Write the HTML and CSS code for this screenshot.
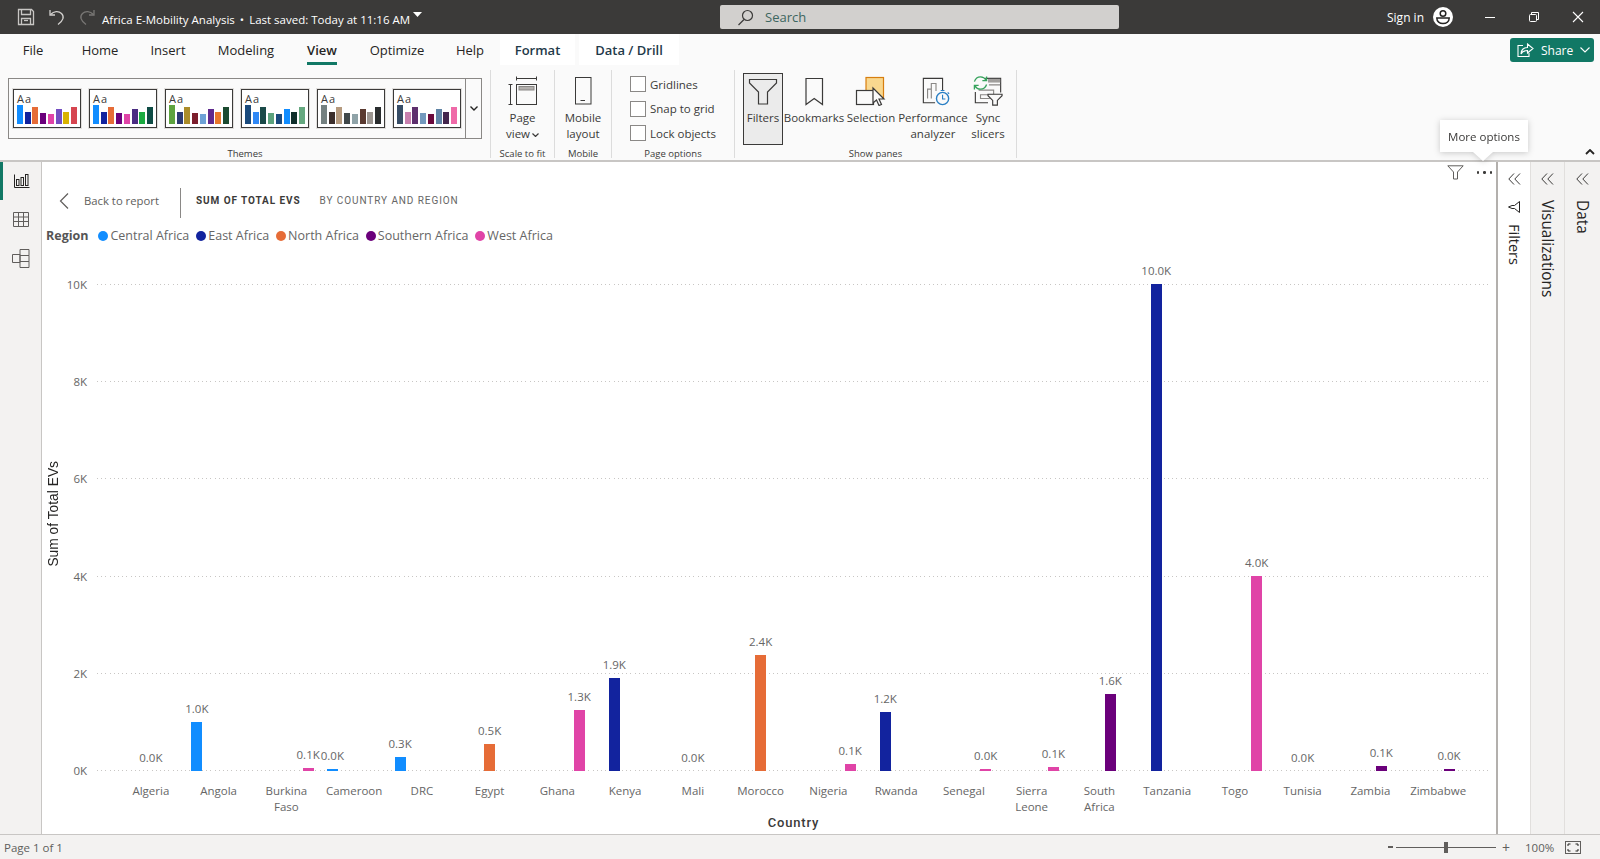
FILE: index.html
```html
<!DOCTYPE html>
<html lang="en">
<head>
<meta charset="utf-8">
<title>Africa E-Mobility Analysis</title>
<link rel="stylesheet" href="styles.css">
</head>
<body>
<header class="titlebar">
  <div class="qat">
    <svg class="q-save" width="18" height="18" viewBox="0 0 18 18" fill="none" stroke="#c8c6c4" stroke-width="1.3"><path d="M1.5 1.5h13l2 2v13h-15z"/><path d="M4.5 1.5v5h9v-5"/><path d="M4.5 16.5v-6h9v6"/><path d="M7 12.5h4"/></svg>
    <svg class="q-undo" width="16" height="18" viewBox="0 0 16 18" fill="none" stroke="#d2d0ce" stroke-width="1.3"><path d="M1 2v5h5"/><path d="M1.5 6.5C5 3 9.5 2.5 12.5 5.5c3 3 2 7-3.5 11"/></svg>
    <svg class="q-redo" width="16" height="18" viewBox="0 0 16 18" fill="none" stroke="#797775" stroke-width="1.3"><path d="M15 2v5h-5"/><path d="M14.5 6.5C11 3 6.5 2.5 3.5 5.5c-3 3-2 7 3.5 11"/></svg>
  </div>
  <div class="doc-title">Africa E-Mobility Analysis<span class="dot">•</span>Last saved: Today at 11:16 AM</div>
  <svg class="doc-caret" width="9" height="5" viewBox="0 0 9 5"><path d="M0 0h9L4.500 5z" fill="#fff"/></svg>
  <div class="search">
    <svg width="17" height="17" viewBox="0 0 17 17" fill="none" stroke="#3b3a39" stroke-width="1.2"><circle cx="10.500" cy="6.500" r="5"/><path d="M7 10.500L1.500 16"/></svg>
    <span>Search</span>
  </div>
  <div class="account">
    <span class="signin">Sign in</span>
    <svg class="avatar" width="20" height="20" viewBox="0 0 20 20"><circle cx="10" cy="10" r="10" fill="#fff"/><circle cx="10" cy="6.500" r="2.800" fill="none" stroke="#252423" stroke-width="1.500"/><path d="M3.800 11h12.400c0 3.500-2.800 5.500-6.200 5.500S3.800 14.500 3.800 11z" fill="none" stroke="#252423" stroke-width="1.500"/></svg>
  </div>
  <div class="winbtns">
    <svg width="12" height="12" viewBox="0 0 12 12" stroke="#fff" fill="none"><path d="M1 6.500h10"/></svg>
    <svg width="12" height="12" viewBox="0 0 12 12" stroke="#fff" fill="none"><rect x="1.500" y="3.500" width="7" height="7" rx="1"/><path d="M3.500 3V1.500h7v7H9"/></svg>
    <svg width="12" height="12" viewBox="0 0 12 12" stroke="#fff" fill="none" stroke-width="1.100"><path d="M1 1l10 10M11 1L1 11"/></svg>
  </div>
</header>

<nav class="tabs">
  <a class="tab t-file"><span>File</span></a>
  <a class="tab t-home"><span>Home</span></a>
  <a class="tab t-insert"><span>Insert</span></a>
  <a class="tab t-modeling"><span>Modeling</span></a>
  <a class="tab t-view active"><span>View</span></a>
  <a class="tab t-optimize"><span>Optimize</span></a>
  <a class="tab t-help"><span>Help</span></a>
  <a class="tab ctx t-format"><span>Format</span></a>
  <a class="tab ctx t-data"><span>Data / Drill</span></a>
  <button class="share">
    <svg width="17" height="15" viewBox="0 0 17 15" fill="none" stroke="#fff" stroke-width="1.100"><path d="M6 2.500H1v11h11V10"/><path d="M10.500 1l5.500 4.500-5.500 4.500V7.500C7.500 7.500 5 8.500 4 11c0-4 2.500-6.500 6.500-6.500z"/></svg>
    <span>Share</span>
    <svg width="10" height="6" viewBox="0 0 10 6" fill="none" stroke="#fff" stroke-width="1.100"><path d="M.5.500L5 5 9.500.500"/></svg>
  </button>
</nav>

<section class="ribbon">
  <div class="group g-themes">
    <div class="themes">
      <div class="theme-list">
        <div class="theme-card"><span class="aa">Aa</span><div class="mini"><i style="background:#118dff"></i><i style="background:#12239e"></i><i style="background:#e66c37"></i><i style="background:#6b007b"></i><i style="background:#e044a7"></i><i style="background:#744ec2"></i><i style="background:#d9b300"></i><i style="background:#d64550"></i></div></div>
        <div class="theme-card"><span class="aa">Aa</span><div class="mini"><i style="background:#118dff"></i><i style="background:#12239e"></i><i style="background:#e66c37"></i><i style="background:#6b007b"></i><i style="background:#e044a7"></i><i style="background:#4a2d82"></i><i style="background:#1aab40"></i><i style="background:#0f4c45"></i></div></div>
        <div class="theme-card"><span class="aa">Aa</span><div class="mini"><i style="background:#5ea33f"></i><i style="background:#2d3a73"></i><i style="background:#ab8c2a"></i><i style="background:#7c1e2c"></i><i style="background:#6ea2d6"></i><i style="background:#5f2a8e"></i><i style="background:#e8782c"></i><i style="background:#1b4a30"></i></div></div>
        <div class="theme-card"><span class="aa">Aa</span><div class="mini"><i style="background:#1a4a7c"></i><i style="background:#2f88f5"></i><i style="background:#1a4a48"></i><i style="background:#5ca27c"></i><i style="background:#1a4a7c"></i><i style="background:#118dff"></i><i style="background:#10302c"></i><i style="background:#65a87f"></i></div></div>
        <div class="theme-card"><span class="aa">Aa</span><div class="mini"><i style="background:#748080"></i><i style="background:#3c2f2c"></i><i style="background:#b59a7e"></i><i style="background:#40484a"></i><i style="background:#8fa3a8"></i><i style="background:#5a3a30"></i><i style="background:#9b9590"></i><i style="background:#2a2d2e"></i></div></div>
        <div class="theme-card"><span class="aa">Aa</span><div class="mini"><i style="background:#374d66"></i><i style="background:#c880ae"></i><i style="background:#5e2f6d"></i><i style="background:#7399bd"></i><i style="background:#6b0a3c"></i><i style="background:#5f83a5"></i><i style="background:#44264d"></i><i style="background:#ef6aa8"></i></div></div>
      </div>
      <div class="theme-more"><svg width="8" height="5" viewBox="0 0 8 5" fill="none" stroke="#252423" stroke-width="1.400"><path d="M.5.500L4 4 7.500.500"/></svg></div>
    </div>
    <div class="group-label">Themes</div>
  </div>

  <div class="group g-scale">
    <div class="rbtn">
      <svg class="ricon" width="30" height="30" viewBox="0 0 30 30" fill="none" stroke="#3b3a39"><path d="M8.500 2.500h20M8.500 .5v4M28.500 .5v4"/><path d="M2.500 8.500v20M.5 8.500h4M.5 28.500h4"/><rect x="8.500" y="8.500" width="20" height="20"/><rect x="11" y="10.500" width="15" height="3.500" fill="#b3b0ad" stroke="#8a8886"/></svg>
      <span class="rlabel">Page<br>view<svg class="mini-caret" width="7" height="4" viewBox="0 0 7 4" fill="none" stroke="#3b3a39" stroke-width="1.200"><path d="M.5.500L3.500 3.500 6.500.500"/></svg></span>
    </div>
    <div class="group-label">Scale to fit</div>
  </div>

  <div class="group g-mobile">
    <div class="rbtn">
      <svg class="ricon" width="18" height="30" viewBox="0 0 18 30" fill="none" stroke="#3b3a39"><rect x="1.500" y="1.500" width="15.500" height="26.500"/><path d="M6.500 24.500h4.500"/></svg>
      <span class="rlabel">Mobile<br>layout</span>
    </div>
    <div class="group-label">Mobile</div>
  </div>

  <div class="group g-options">
    <div class="checks">
      <label class="check"><span class="box"></span>Gridlines</label>
      <label class="check"><span class="box"></span>Snap to grid</label>
      <label class="check"><span class="box"></span>Lock objects</label>
    </div>
    <div class="group-label">Page options</div>
  </div>

  <div class="group g-panes">
    <div class="rbtns">
      <div class="rbtn b-filters on">
        <svg class="ricon" width="30" height="30" viewBox="0 0 30 30" fill="none" stroke="#3b3a39" stroke-width="1.200"><path d="M1.500 3.500h27v3.500l-9 9v12h-9v-12l-9-9z"/></svg>
        <span class="rlabel">Filters</span>
      </div>
      <div class="rbtn b-bookmarks">
        <svg class="ricon" width="30" height="30" viewBox="0 0 30 30" fill="none" stroke="#3b3a39" stroke-width="1.200"><path d="M7 2.500h16.500v26L15.200 22.500 7 28.500z"/></svg>
        <span class="rlabel">Bookmarks</span>
      </div>
      <div class="rbtn b-selection">
        <svg class="ricon" width="32" height="30" viewBox="0 0 32 30" fill="none"><rect x="11" y="1.500" width="17.500" height="20" fill="#f9d88f" stroke="#d77e0f" stroke-width="1.200"/><rect x="1.500" y="14.500" width="17" height="14" fill="#fafafa" stroke="#3b3a39" stroke-width="1.200"/><path d="M18 12v15l3.500-3 2.500 5.500 2.500-1-2.500-5.500h5z" fill="#fafafa" stroke="#3b3a39" stroke-width="1.200"/></svg>
        <span class="rlabel">Selection</span>
      </div>
      <div class="rbtn b-perf">
        <svg class="ricon" width="32" height="32" viewBox="0 0 32 32" fill="none"><path d="M23 15V2.500H2.500v26H15" stroke="#3b3a39" stroke-width="1.200"/><path d="M7 24V14h4v10M11 24V8h5v8" stroke="#8a8886" stroke-width="1.200"/><circle cx="23" cy="24" r="6.500" fill="#fafafa" stroke="#2a7fc4" stroke-width="1.500"/><path d="M23 20v4.500h3M21 15.500h4M28.500 17.500l1.500 1.500" stroke="#2a7fc4" stroke-width="1.200"/></svg>
        <span class="rlabel">Performance<br>analyzer</span>
      </div>
      <div class="rbtn b-sync">
        <svg class="ricon" width="32" height="32" viewBox="0 0 32 32" fill="none"><path d="M13 2.500h16.500v15M2.500 17v11.500H16" stroke="#3b3a39" stroke-width="1.200"/><rect x="16" y="3" width="13" height="4" fill="#a19f9d"/><path d="M17 9.500h12M6 15h16v5H8v4h10" stroke="#8a8886" stroke-width="1.200"/><path d="M1.500 6c1-3 3.500-5 6.500-5 2.500 0 4.500 1 6 3.500M14.500 .5v4.500H10M14.500 9c-1 3-3.500 5-6.500 5-2.500 0-4.500-1-6-3.500M1.500 14.500V10H6" stroke="#36a35c" stroke-width="1.400"/><path d="M16 19.500h15v1.500l-5 5v5h-5v-5l-5-5z" fill="#fafafa" stroke="#3b3a39" stroke-width="1.200"/></svg>
        <span class="rlabel">Sync<br>slicers</span>
      </div>
    </div>
    <div class="group-label">Show panes</div>
  </div>

  <svg class="collapse" width="10" height="6" viewBox="0 0 10 6" fill="none" stroke="#252423" stroke-width="1.800"><path d="M1 5l4-4 4 4"/></svg>
</section>

<main class="main">
  <aside class="nav">
    <div class="nav-item current"><svg width="16" height="14" viewBox="0 0 16 14" fill="none" stroke="#252423"><path d="M.5.500v13h15"/><rect x="2.500" y="5.500" width="2.500" height="6"/><rect x="7" y="3.500" width="2.500" height="8"/><rect x="11.500" y=".5" width="2.500" height="11"/></svg></div>
    <div class="nav-item"><svg width="16" height="15" viewBox="0 0 16 15" fill="none" stroke="#605e5c"><path d="M.5.500h15v14H.5zM.5 5h15M.5 9.500h15M5.500.5v14M10.500.5v14"/></svg></div>
    <div class="nav-item"><svg width="18" height="19" viewBox="0 0 18 19" fill="none" stroke="#605e5c"><path d="M.5 5.500h7.500v8H.5zM8 .5h9v6H8zM8 6.500h9v6H8zM8 12.500h9v6H8z"/></svg></div>
  </aside>

  <section class="canvas">
    <div class="vis-tools">
      <svg width="17" height="15" viewBox="0 0 17 15" fill="none" stroke="#605e5c"><path d="M.8.800h15.400L10.500 7v7h-4V7z"/></svg>
      <span class="dots"><i></i><i></i><i></i></span>
    </div>
    <div class="drill-head">
      <div class="back">
        <svg width="10" height="16" viewBox="0 0 10 16" fill="none" stroke="#605e5c" stroke-width="1.200"><path d="M9 .5L1.500 8 9 15.500"/></svg>
        <span>Back to report</span>
      </div>
      <div class="crumb"><b>SUM OF TOTAL EVS</b><span>BY COUNTRY AND REGION</span></div>
    </div>
    <div class="legend">
      <strong>Region</strong>
      <span class="lg r1">Central Africa</span>
      <span class="lg r2">East Africa</span>
      <span class="lg r3">North Africa</span>
      <span class="lg r4">Southern Africa</span>
      <span class="lg r5">West Africa</span>
    </div>
    <div class="chart">
      <div class="y-title"><span>Sum of Total EVs</span></div>
      <div class="y-ticks"><span>10K</span><span>8K</span><span>6K</span><span>4K</span><span>2K</span><span>0K</span></div>
      <div class="plot-wrap">
        <div class="plot">
          <div class="grid"><i></i><i></i><i></i><i></i><i></i><i></i></div>
          <div class="cols">
            <div class="col"><div class="bw r3"><span>0.0K</span><i style="height:0"></i></div></div>
            <div class="col"><div class="bw r1"><span>1.0K</span><i style="height:49px"></i></div></div>
            <div class="col"><div class="bw r5"><span>0.1K</span><i style="height:3px"></i></div></div>
            <div class="col"><div class="bw r1"><span>0.0K</span><i style="height:2px"></i></div></div>
            <div class="col"><div class="bw r1"><span>0.3K</span><i style="height:14px"></i></div></div>
            <div class="col"><div class="bw r3"><span>0.5K</span><i style="height:27px"></i></div></div>
            <div class="col"><div class="bw r5"><span>1.3K</span><i style="height:61px"></i></div></div>
            <div class="col"><div class="bw r2"><span>1.9K</span><i style="height:93px"></i></div></div>
            <div class="col"><div class="bw r3"><span>0.0K</span><i style="height:0"></i></div></div>
            <div class="col"><div class="bw r3"><span>2.4K</span><i style="height:116px"></i></div></div>
            <div class="col"><div class="bw r5"><span>0.1K</span><i style="height:7px"></i></div></div>
            <div class="col"><div class="bw r2"><span>1.2K</span><i style="height:59px"></i></div></div>
            <div class="col"><div class="bw r5"><span>0.0K</span><i style="height:2px"></i></div></div>
            <div class="col"><div class="bw r5"><span>0.1K</span><i style="height:4px"></i></div></div>
            <div class="col"><div class="bw r4"><span>1.6K</span><i style="height:77px"></i></div></div>
            <div class="col"><div class="bw r2"><span>10.0K</span><i style="height:487px"></i></div></div>
            <div class="col"><div class="bw r5"><span>4.0K</span><i style="height:195px"></i></div></div>
            <div class="col"><div class="bw r3"><span>0.0K</span><i style="height:0"></i></div></div>
            <div class="col"><div class="bw r4"><span>0.1K</span><i style="height:5px"></i></div></div>
            <div class="col"><div class="bw r4"><span>0.0K</span><i style="height:2px"></i></div></div>
          </div>
        </div>
        <div class="cats">
          <span>Algeria</span><span>Angola</span><span>Burkina<br>Faso</span><span>Cameroon</span><span>DRC</span><span>Egypt</span><span>Ghana</span><span>Kenya</span><span>Mali</span><span>Morocco</span><span>Nigeria</span><span>Rwanda</span><span>Senegal</span><span>Sierra<br>Leone</span><span>South<br>Africa</span><span>Tanzania</span><span>Togo</span><span>Tunisia</span><span>Zambia</span><span>Zimbabwe</span>
        </div>
        <div class="x-title">Country</div>
      </div>
    </div>
  </section>

  <aside class="pane p-filters">
    <svg class="dbl" width="13" height="12" viewBox="0 0 13 12" fill="none" stroke="#3b3a39"><path d="M6 .5L.8 6 6 11.500M12 .5L6.800 6 12 11.500"/></svg>
    <svg class="pane-icon" width="12" height="12" viewBox="0 0 12 12" fill="none" stroke="#252423"><path d="M11.500.5v11L6.500 7.500H4L.5 6l3.500-1.500h2.500z"/></svg>
    <span class="pane-text">Filters</span>
  </aside>
  <aside class="pane p-viz">
    <svg class="dbl" width="13" height="12" viewBox="0 0 13 12" fill="none" stroke="#3b3a39"><path d="M6 .5L.8 6 6 11.500M12 .5L6.800 6 12 11.500"/></svg>
    <span class="pane-text">Visualizations</span>
  </aside>
  <aside class="pane p-data">
    <svg class="dbl" width="13" height="12" viewBox="0 0 13 12" fill="none" stroke="#3b3a39"><path d="M6 .5L.8 6 6 11.500M12 .5L6.800 6 12 11.500"/></svg>
    <span class="pane-text">Data</span>
  </aside>
</main>

<footer class="status">
  <span class="page-no">Page 1 of 1</span>
  <div class="zoomer">
    <span class="z-minus"></span>
    <div class="z-track"><i></i></div>
    <span class="z-plus">+</span>
    <span class="z-val">100%</span>
    <svg width="16" height="13" viewBox="0 0 16 13" fill="none" stroke="#605e5c"><rect x=".5" y=".5" width="15" height="12"/><path d="M3 5V3h2.500M10.500 3H13v2M13 8v2h-2.500M5.500 10H3V8" stroke="#252423"/></svg>
  </div>
</footer>

<div class="tooltip">More options</div>
</body>
</html>
```

FILE: styles.css
```css
* { box-sizing: border-box; }
html, body { margin: 0; padding: 0; }
body {
  position: relative;
  width: 1600px;
  height: 859px;
  overflow: hidden;
  display: flex;
  flex-direction: column;
  font-family: "Open Sans", "Noto Sans", sans-serif;
  font-size: 12px;
  color: #252423;
  background: #f3f2f1;
}

/* Title bar */
.titlebar {
  flex: 0 0 34px;
  display: flex;
  align-items: center;
  background: #3b3a39;
  color: #fff;
}
.qat { display: flex; align-items: center; margin-left: 17px; width: 85px; }
.q-undo { margin-left: 14px; }
.q-redo { margin-left: 14px; }
.doc-title { font-size: 11.5px; width: 311px; white-space: nowrap; padding-top: 4px; }
.dot { margin: 0 5px; }
.doc-caret { margin-bottom: 6px; }
.search {
  margin-left: 298px;
  width: 399px;
  height: 24px;
  background: #d2d0ce;
  border-radius: 2px;
  display: flex;
  align-items: center;
  padding-left: 17px;
  color: #3d6660;
  font-size: 13px;
  gap: 11px;
}
.account { display: flex; align-items: center; margin-left: 268px; gap: 9px; }
.signin { font-size: 12px; }
.winbtns { display: flex; align-items: center; margin-left: 31px; gap: 32px; }

/* Tabs */
.tabs {
  flex: 0 0 31px;
  display: flex;
  align-items: stretch;
  background: #fafafa;
}
.tab { display: flex; justify-content: center; padding-top: 8px; font-size: 13px; line-height: 16px; }
.tab span { display: block; height: 23px; padding-bottom: 4px; }
.t-file { width: 66px; }
.t-home { width: 68px; }
.t-insert { width: 68px; }
.t-modeling { width: 88px; }
.t-view { width: 64px; }
.t-optimize { width: 86px; }
.t-help { width: 60px; }
.tab.active span { border-bottom: 3px solid #117865; }
.tab.active { font-weight: 600; }
.ctx { background: #fff; font-weight: 600; color: #1f3a4a; }
.t-format { width: 75px; margin-right: 4px; }
.t-data { width: 100px; }
.share {
  margin: 4px 6px 3px auto;
  width: 84px;
  height: 24px;
  background: #117865;
  border: 0;
  border-radius: 3px;
  color: #fff;
  font: 12px "Open Sans", sans-serif;
  display: flex;
  align-items: center;
  padding: 0 0 0 7px;
  gap: 7px;
}

/* Ribbon */
.ribbon {
  flex: 0 0 95px;
  display: flex;
  padding: 5px 6px 2px 8px;
  background: #fafafa;
}
.group {
  display: flex;
  flex-direction: column;
  justify-content: space-between;
  border-right: 1px solid #dcdcdc;
}
.group-label { font-size: 9.5px; line-height: 12px; margin-bottom: -2px; text-align: center; color: #3b3a39; }
.g-themes { width: 483px; padding-right: 8px; }
.themes {
  margin-top: 8px;
  height: 61px;
  display: flex;
  border: 1px solid #8a8886;
}
.theme-list { flex: 1; display: flex; gap: 8px; padding: 10px 0 0 4px; }
.theme-card {
  width: 68px;
  height: 39px;
  border: 1.5px solid #3b3a39;
  outline: 1px solid #e1dfdd;
  background: #fff;
  padding: 2px 3px 0;
  position: relative;
}
.aa { display: block; font-size: 11px; line-height: 13px; letter-spacing: 1px; color: #3b3a39; }
.mini { position: absolute; left: 3px; right: 3px; bottom: 3px; display: flex; align-items: flex-end; justify-content: space-between; }
.mini i { display: block; width: 6px; }
.mini i:nth-child(1) { height: 19px; }
.mini i:nth-child(2) { height: 12px; }
.mini i:nth-child(3) { height: 17px; }
.mini i:nth-child(4) { height: 11px; }
.mini i:nth-child(5) { height: 10px; }
.mini i:nth-child(6) { height: 15px; }
.mini i:nth-child(7) { height: 12px; }
.mini i:nth-child(8) { height: 17px; }
.theme-more {
  flex: 0 0 16px;
  border-left: 1px solid #8a8886;
  display: flex;
  align-items: center;
  justify-content: center;
}
.g-scale { width: 64px; align-items: stretch; }
.g-mobile { width: 57px; }
.g-options { width: 123px; }
.g-panes { width: 282px; }
.rbtn {
  display: flex;
  flex-direction: column;
  align-items: center;
  height: 72px;
  margin-top: 3px;
  padding-top: 3px;
  flex: none;
}
.ricon { height: 30px; flex: none; }
.rlabel { margin-top: 4px; font-size: 11.5px; line-height: 16px; text-align: center; white-space: nowrap; color: #3b3a39; }
.mini-caret { margin-left: 2px; vertical-align: 1px; }
.checks { padding: 6px 0 0 18px; display: flex; flex-direction: column; gap: 8.5px; }
.check { display: flex; align-items: center; height: 16px; gap: 4px; font-size: 11.5px; color: #3b3a39; }
.box { width: 16px; height: 16px; border: 1px solid #8a8886; background: #fff; }
.rbtns { display: flex; padding-left: 8px; }
.rbtns .rbtn { flex: none; }
.b-filters { width: 40px; }
.b-filters.on { background: #ebebeb; border: 1.5px solid #3b3a39; padding-top: 1.5px; }
.b-bookmarks { width: 62px; }
.b-selection { width: 52px; }
.b-perf { width: 72px; }
.b-perf .ricon { margin-left: 5px; }
.b-sync { width: 38px; }
.collapse { margin-left: auto; align-self: flex-end; margin-bottom: 3px; margin-right: -1px; }

/* Main area */
.main {
  flex: 0 0 675px;
  display: flex;
  border-top: 2px solid #c8c6c4;
  border-bottom: 1px solid #c8c6c4;
  background: #f3f2f1;
}
.nav { flex: 0 0 41px; display: flex; flex-direction: column; }
.nav-item { height: 39px; display: flex; align-items: center; justify-content: center; }
.nav-item.current { border-left: 3px solid #117865; height: 38px; }
.canvas {
  flex: 1;
  min-width: 0;
  display: flex;
  flex-direction: column;
  background: #fff;
  border-left: 1px solid #c8c6c4;
  border-right: 2px solid #b3b0ad;
}
.vis-tools { height: 23px; display: flex; align-items: center; justify-content: flex-end; gap: 13px; padding: 0 4px 2px 0; }
.dots { display: flex; gap: 4px; }
.dots i { display: block; width: 2.5px; height: 2.5px; background: #3b3a39; border-radius: 50%; }
.drill-head { margin-top: 3px; height: 30px; display: flex; align-items: center; padding-left: 17px; }
.back { display: flex; align-items: center; gap: 15px; width: 122px; height: 30px; padding-bottom: 5px; border-right: 1px solid #8a8886; color: #605e5c; font-size: 11.3px; }
.crumb { display: flex; gap: 19px; padding: 0 0 5px 15px; font-family: Roboto, sans-serif; font-size: 10px; letter-spacing: .92px; color: #666; }
.crumb b { color: #3b3a39; font-weight: 700; }
.legend { margin-top: 8px; height: 19px; display: flex; align-items: center; padding-left: 4px; gap: 7px; font-size: 12.5px; color: #666; white-space: nowrap; }
.legend strong { font-weight: 700; color: #555; margin-right: 3px; }
.lg { display: flex; align-items: center; gap: 2px; color: #666; }
.lg::before { content: ""; width: 10px; height: 10px; border-radius: 50%; background: var(--c); }
.r1 { --c: #118dff; }
.r2 { --c: #12239e; }
.r3 { --c: #e66c37; }
.r4 { --c: #6b007b; }
.r5 { --c: #e044a7; }

/* Chart */
.chart { margin-top: 39px; display: flex; align-items: flex-start; }
.y-title {
  flex: 0 0 22px;
  height: 487px;
  padding-bottom: 27px;
  display: flex;
  align-items: center;
  justify-content: center;
}
.y-title span {
  writing-mode: vertical-rl;
  transform: rotate(180deg);
  font-family: "Liberation Sans", Arial, sans-serif;
  font-size: 13.8px;
  color: #252423;
  white-space: nowrap;
}
.y-ticks {
  flex: 0 0 23px;
  height: 487px;
  display: flex;
  flex-direction: column;
  justify-content: space-between;
  align-items: flex-end;
  font-size: 11.5px;
  color: #666;
}
.y-ticks span { height: 1px; line-height: 1px; }
.plot-wrap { margin-left: 10px; width: 1393px; }
.plot { position: relative; height: 487px; }
.grid { position: absolute; inset: 0; display: flex; flex-direction: column; justify-content: space-between; }
.grid i {
  display: block;
  height: 1px;
  background: repeating-linear-gradient(to right, #c8c6c4 0 1px, transparent 1px 4.2px);
}
.cols {
  position: relative;
  height: 487px;
  margin: 0 18px 0 20px;
  display: grid;
  grid-template-columns: repeat(20, 1fr);
  grid-template-rows: 487px;
}
.col {
  height: 487px;
  display: grid;
  grid-template-columns: repeat(5, 10.9px);
  grid-template-rows: 487px;
  justify-content: center;
  align-items: end;
}
.bw { display: flex; flex-direction: column; align-items: center; white-space: nowrap; }
.bw span { font-size: 11.5px; line-height: 16px; margin-bottom: 5px; color: #666; }
.bw i { display: block; width: 11px; background: var(--c); }
.bw.r1 { grid-column: 1; }
.bw.r2 { grid-column: 2; }
.bw.r3 { grid-column: 3; }
.bw.r4 { grid-column: 4; }
.bw.r5 { grid-column: 5; }
.cats {
  margin: 12px 18px 0 20px;
  height: 32px;
  display: grid;
  grid-template-columns: repeat(20, 1fr);
  font-size: 11.5px;
  line-height: 16px;
  text-align: center;
  color: #666;
}
.x-title { height: 16px; line-height: 16px; text-align: center; font-family: Roboto, sans-serif; font-weight: 500; font-size: 13px; letter-spacing: .8px; color: #3b3a39; }

/* Side panes */
.pane { display: flex; flex-direction: column; align-items: center; padding-top: 11px; background: #f3f2f1; }
.p-filters { flex: 0 0 33px; background: #fff; border-right: 1px solid #e1dfdd; }
.p-viz { flex: 0 0 34px; border-right: 1px solid #e1dfdd; }
.p-data { flex: 0 0 35px; }
.dbl { flex: none; }
.pane-icon { margin-top: 16px; }
.pane-text { writing-mode: vertical-rl; font-size: 15.4px; font-weight: 500; margin-top: 15px; color: #252423; }
.p-filters .pane-text { margin-top: 11px; font-size: 14.5px; }

/* Status bar */
.status { flex: 0 0 24px; display: flex; align-items: center; background: #f3f2f1; color: #605e5c; padding-left: 4px; }
.page-no { font-size: 11.5px; }
.zoomer { margin-left: auto; display: flex; align-items: center; }
.z-minus { width: 5px; height: 2px; background: #605e5c; margin-right: 3px; }
.z-track { position: relative; width: 100px; height: 1px; background: #605e5c; }
.z-track i { position: absolute; left: 48px; top: -5px; width: 4px; height: 11px; background: #605e5c; }
.z-plus { margin-left: 6px; font-size: 14px; width: 16px; }
.z-val { font-size: 11.5px; margin-left: 7px; width: 40px; }
.zoomer svg { margin-right: 19px; }

/* Tooltip */
.tooltip {
  position: absolute;
  left: 1440px;
  top: 120px;
  width: 88px;
  height: 32px;
  background: #fff;
  font-size: 11.5px;
  line-height: 33px;
  text-align: center;
  color: #3b3a39;
  filter: drop-shadow(0 1px 3px rgba(0,0,0,.2));
}
.tooltip::after {
  content: "";
  position: absolute;
  left: 33px;
  top: 32px;
  border: 10px solid transparent;
  border-top: 9px solid #fff;
  border-bottom: 0;
}
```
